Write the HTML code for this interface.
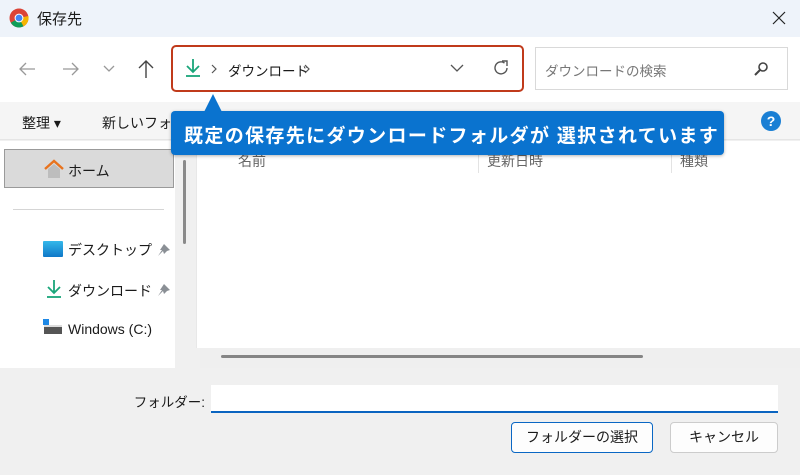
<!DOCTYPE html>
<html><head><meta charset="utf-8"><style>
*{margin:0;padding:0;box-sizing:border-box}
body{width:800px;height:475px;overflow:hidden;background:#f0f0f0;font-family:"Liberation Sans","Noto Sans CJK JP",sans-serif;color:#1a1a1a;position:relative;font-size:14px}
.a{position:absolute}
</style></head><body>
<div class="a" style="left:0;top:0;width:800px;height:37px;background:#eef3fa"></div>
<svg class="a" style="left:9px;top:8px" width="20" height="20" viewBox="0 0 20 20"><circle cx="10" cy="10" r="9.5" fill="#db4437"/><path d="M10 10 L1.8 14.8 A9.5 9.5 0 0 0 14.5 18.3Z" fill="#0f9d58"/><path d="M10 10 L14.5 18.3 A9.5 9.5 0 0 0 19.4 8Z" fill="#f4b400"/><circle cx="10" cy="10" r="4.4" fill="#fff"/><circle cx="10" cy="10" r="3.4" fill="#4285f4"/></svg>
<div class="a" style="left:37px;top:8px;font-size:15px">保存先</div>
<svg class="a" style="left:771px;top:10px" width="16" height="16"><path d="M2 2L14 14M14 2L2 14" stroke="#222" stroke-width="1.2"/></svg>
<div class="a" style="left:0;top:37px;width:800px;height:65px;background:#fff"></div>
<svg class="a" style="left:18px;top:61px" width="18" height="16"><path d="M17 8H2M8 2L2 8L8 14" stroke="#999" stroke-width="1.3" fill="none"/></svg>
<svg class="a" style="left:62px;top:61px" width="18" height="16"><path d="M1 8H16M10 2L16 8L10 14" stroke="#999" stroke-width="1.3" fill="none"/></svg>
<svg class="a" style="left:103px;top:65px" width="12" height="8"><path d="M1 1L6 6L11 1" stroke="#999" fill="none" stroke-width="1.3"/></svg>
<svg class="a" style="left:137px;top:59px" width="18" height="20"><path d="M9 19V2M2 9L9 2L16 9" stroke="#444" stroke-width="1.4" fill="none"/></svg>
<div class="a" style="left:171px;top:45px;width:353px;height:47px;border:2.5px solid #c03a1b;border-radius:5px;background:#fff"></div>
<svg class="a" style="left:185px;top:58px" width="16" height="20"><path d="M8 1V14M2 8L8 14L14 8" stroke="#1aa67a" stroke-width="1.8" fill="none"/><path d="M1 18H15" stroke="#1aa67a" stroke-width="1.8"/></svg>
<svg class="a" style="left:211px;top:64px" width="6" height="10"><path d="M1 1L5 5L1 9" stroke="#555" fill="none" stroke-width="1.2"/></svg>
<div class="a" style="left:228px;top:60px;font-size:13.5px">ダウンロード</div>
<svg class="a" style="left:304px;top:64px" width="6" height="10"><path d="M1 1L5 5L1 9" stroke="#555" fill="none" stroke-width="1.2"/></svg>
<svg class="a" style="left:450px;top:64px" width="14" height="8"><path d="M1 1L7 7L13 1" stroke="#555" fill="none" stroke-width="1.3"/></svg>
<svg class="a" style="left:491px;top:58px" width="20" height="20"><path d="M16 10A6 6 0 1 1 13.5 5" stroke="#555" fill="none" stroke-width="1.4"/><path d="M11 3H16V8" stroke="#555" fill="none" stroke-width="1.4"/></svg>
<div class="a" style="left:535px;top:47px;width:253px;height:43px;border:1px solid #d9d9d9;background:#fff"></div>
<div class="a" style="left:545px;top:60px;color:#777;font-size:13.5px">ダウンロードの検索</div>
<svg class="a" style="left:753px;top:61px" width="16" height="16"><circle cx="10" cy="6" r="4" stroke="#444" stroke-width="1.6" fill="none"/><path d="M7 9L2 14" stroke="#444" stroke-width="2"/></svg>
<div class="a" style="left:0;top:102px;width:800px;height:38px;background:#f5f5f5;border-bottom:1px solid #e5e5e5"></div>
<div class="a" style="left:22px;top:113px">整理 ▾</div>
<div class="a" style="left:102px;top:113px">新しいフォルダー</div>
<div class="a" style="left:761px;top:111px;width:20px;height:20px;border-radius:50%;background:#1a7fd4;color:#fff;font-weight:bold;text-align:center;line-height:20px;font-size:14px">?</div>
<div class="a" style="left:0;top:141px;width:175px;height:227px;background:#fff"></div>
<div class="a" style="left:4px;top:149px;width:170px;height:39px;background:#dadada;border:1px solid #9a9a9a"></div>
<svg class="a" style="left:43px;top:159px" width="22" height="20"><path d="M2 10L11 2L20 10" stroke="#e8731e" stroke-width="2.4" fill="none"/><path d="M5 10V19H17V10L11 5Z" fill="#bdbdbd"/></svg>
<div class="a" style="left:68px;top:161px">ホーム</div>
<div class="a" style="left:13px;top:209px;width:151px;height:1px;background:#d5d5d5"></div>
<div class="a" style="left:43px;top:241px;width:20px;height:16px;background:linear-gradient(#35b8ea,#0f78c8);border-radius:1px"></div>
<div class="a" style="left:68px;top:240px">デスクトップ</div>
<svg class="a" style="left:46px;top:279px" width="16" height="20"><path d="M8 1V14M2 8L8 14L14 8" stroke="#1aa67a" stroke-width="1.8" fill="none"/><path d="M1 18H15" stroke="#1aa67a" stroke-width="1.8"/></svg>
<div class="a" style="left:68px;top:281px">ダウンロード</div>
<svg class="a" style="left:157px;top:243px" width="14" height="14"><path d="M7 1L13 7L10 8L7 11L6 8L1 13L5 7L3 7Z" fill="#8a8f95"/></svg>
<svg class="a" style="left:157px;top:283px" width="14" height="14"><path d="M7 1L13 7L10 8L7 11L6 8L1 13L5 7L3 7Z" fill="#8a8f95"/></svg>
<div class="a" style="left:43px;top:319px;width:6px;height:6px;background:#1e88e5"></div>
<div class="a" style="left:44px;top:325px;width:18px;height:9px;background:#555;border-top:2px solid #ddd"></div>
<div class="a" style="left:68px;top:321px">Windows (C:)</div>
<div class="a" style="left:175px;top:141px;width:20px;height:227px;background:#f0f0f0"></div>
<div class="a" style="left:183px;top:160px;width:3px;height:84px;background:#8a8a8a;border-radius:2px"></div>
<div class="a" style="left:196px;top:141px;width:604px;height:207px;background:#fff;border-left:1px solid #e8e8e8"></div>
<div class="a" style="left:238px;top:151px;color:#666">名前</div>
<div class="a" style="left:487px;top:151px;color:#666">更新日時</div>
<div class="a" style="left:680px;top:151px;color:#666">種類</div>
<div class="a" style="left:478px;top:150px;width:1px;height:23px;background:#e3e3e3"></div>
<div class="a" style="left:671px;top:150px;width:1px;height:23px;background:#e3e3e3"></div>
<div class="a" style="left:200px;top:348px;width:600px;height:20px;background:#efefef"></div>
<div class="a" style="left:221px;top:355px;width:422px;height:3px;background:#858585;border-radius:2px"></div>
<div class="a" style="left:171px;top:111px;width:553px;height:44px;background:#0a73cf;border-radius:4px;box-shadow:0 1px 3px rgba(0,0,0,.3)"></div>
<div class="a" style="left:204px;top:94px;width:0;height:0;border-left:9px solid transparent;border-right:9px solid transparent;border-bottom:18px solid #0a73cf"></div>
<div class="a" style="left:184px;top:121px;color:#fff;font-size:19px;font-weight:bold;letter-spacing:1.35px;white-space:nowrap">既定の保存先にダウンロードフォルダが 選択されています</div>
<div class="a" style="left:100px;top:391px;width:105px;text-align:right;font-size:13.5px">フォルダー:</div>
<div class="a" style="left:211px;top:385px;width:567px;height:28px;background:#fff;border-bottom:2px solid #0a64c0"></div>
<div class="a" style="left:511px;top:422px;width:142px;height:31px;background:#fdfdfd;border:1px solid #0a67c4;border-radius:4px;text-align:center;line-height:29px">フォルダーの選択</div>
<div class="a" style="left:670px;top:422px;width:108px;height:31px;background:#fdfdfd;border:1px solid #ccc;border-radius:4px;text-align:center;line-height:29px">キャンセル</div>
</body></html>
